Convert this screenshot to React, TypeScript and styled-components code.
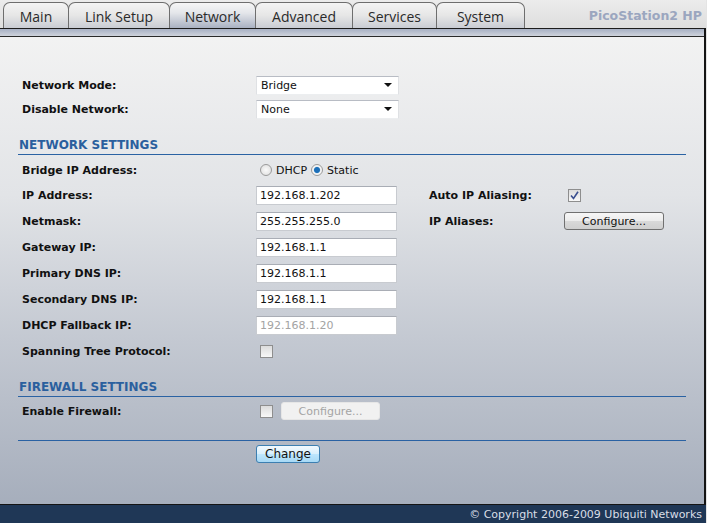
import * as React from "react";
import styled, { createGlobalStyle } from "styled-components";

const GlobalStyle = createGlobalStyle`
  html, body {
    margin: 0;
    padding: 0;
    background: #e4e4e4;
  }
  body {
    font-family: "DejaVu Sans", Verdana, sans-serif;
    font-size: 11px;
    color: #111;
  }
`;

const Page = styled.div`
  display: flex;
  flex-direction: column;
  width: 706px;
  height: 523px;
`;

const TopBar = styled.div`
  display: flex;
  align-items: flex-end;
  justify-content: space-between;
  height: 28px;
  padding-left: 3px;
  background: linear-gradient(#ececec, #dedede);
`;

const Tabs = styled.div`
  display: flex;
  align-items: flex-end;
  height: 100%;
`;

const Tab = styled.div<{ $w: number; $active?: boolean }>`
  box-sizing: border-box;
  width: ${(p) => p.$w}px;
  height: 26px;
  margin-right: -1px;
  display: flex;
  align-items: center;
  justify-content: center;
  padding-top: 1px;
  border: 1px solid #6e6e6e;
  border-bottom: none;
  border-radius: 7px 7px 0 0;
  font-family: "Open Sans", "DejaVu Sans", sans-serif;
  font-size: 14px;
  color: #2a2a2a;
  background: ${(p) =>
    p.$active
      ? "linear-gradient(#f6f6f6 0%, #e4e6ea 40%, #a9b1c2 100%)"
      : "linear-gradient(#f4f4f4 0%, #e6e6e6 50%, #c9ccd3 100%)"};
`;

const Brand = styled.div`
  padding: 0 4px 5px 0;
  font-family: "DejaVu Sans", sans-serif;
  font-weight: bold;
  font-size: 12.5px;
  color: #9ba6bf;
`;

const Panel = styled.div`
  flex: 1;
  display: flex;
  flex-direction: column;
  border-right: 2px solid #141414;
  border-bottom: 1px solid #141414;
  background: linear-gradient(#f3f3f3 0%, #e2e4e7 35%, #c4c9d2 65%, #a6aebc 100%);
`;

const Strip = styled.div`
  height: 7px;
  border-top: 1px solid #1c1c1c;
  border-bottom: 1px solid #2a2a2a;
  background: linear-gradient(#a7b0c3, #cfd3dc);
`;

const Content = styled.div`
  padding: 36px 18px 0 18px;
`;

const Grid = styled.div`
  display: grid;
  grid-template-columns: 238px 173px 135px 1fr;
  align-items: center;
`;

const Row = styled.div<{ $h?: number; $mt?: number }>`
  display: contents;
  & > * {
    height: ${(p) => p.$h ?? 26}px;
    margin-top: ${(p) => p.$mt ?? 0}px;
  }
`;

const Cell = styled.div<{ $gap?: number }>`
  display: flex;
  align-items: center;
  gap: ${(p) => p.$gap ?? 5}px;
`;

const Label = styled(Cell)<{ $side?: boolean }>`
  padding-left: ${(p) => (p.$side ? 0 : 4)}px;
  font-weight: bold;
`;

const SectionTitle = styled.div<{ $mt: number }>`
  margin-top: ${(p) => p.$mt}px;
  padding: 0 0 2px 1px;
  line-height: 14px;
  border-bottom: 1px solid #2a62a3;
  font-weight: bold;
  font-size: 12px;
  color: #2a5f9e;
`;

const Divider = styled.div`
  margin-top: 16px;
  border-top: 1px solid #2a62a3;
`;

const Select = styled.div`
  box-sizing: border-box;
  width: 143px;
  height: 19px;
  display: flex;
  align-items: center;
  justify-content: space-between;
  padding: 0 6px 0 4px;
  background: #fff;
  border-top: 1px solid #b8bcc4;
  border-left: 1px solid #dfe1e4;
  border-right: 1px solid #dfe1e4;
  border-bottom: 1px solid #eceef0;
`;

const Arrow = styled.span`
  width: 0;
  height: 0;
  border-left: 4px solid transparent;
  border-right: 4px solid transparent;
  border-top: 4px solid #111;
`;

const Input = styled.div<{ $disabled?: boolean }>`
  box-sizing: border-box;
  width: 141px;
  height: 19px;
  display: flex;
  align-items: center;
  padding-left: 3px;
  background: #fff;
  border: 1px solid #c8cbd0;
  border-top-color: #a9adb5;
  color: ${(p) => (p.$disabled ? "#a3a3a3" : "#111")};
`;

const Radio = styled.span<{ $on?: boolean }>`
  box-sizing: border-box;
  width: 12px;
  height: 12px;
  border-radius: 50%;
  border: 1px solid #9a9a9a;
  background: ${(p) =>
    p.$on
      ? "radial-gradient(circle, #1d6fb8 0 2.5px, #6aa6d6 3px, #f4f4f4 3.6px)"
      : "radial-gradient(circle, #fafafa, #dcdcdc)"};
`;

const RadioGroup = styled(Cell)`
  padding-left: 4px;
  gap: 4px;
  & > span:nth-child(3) {
    margin-left: 8px;
  }
`;

const Check = styled.span`
  box-sizing: border-box;
  width: 13px;
  height: 13px;
  display: inline-flex;
  align-items: center;
  justify-content: center;
  border: 1px solid #8e8e8e;
  background: linear-gradient(#dcdcdc, #f8f8f8);
  margin-left: 4px;
`;

const Button = styled.div<{ $w: number; $disabled?: boolean }>`
  box-sizing: border-box;
  width: ${(p) => p.$w}px;
  height: 18px;
  display: flex;
  align-items: center;
  justify-content: center;
  border-radius: 3px;
  font-size: 11px;
  border: 1px solid ${(p) => (p.$disabled ? "#e6e6e6" : "#707070")};
  color: ${(p) => (p.$disabled ? "#a4a4a4" : "#111")};
  background: ${(p) =>
    p.$disabled ? "#f1f1f1" : "linear-gradient(#f6f6f6 0%, #ececec 50%, #d9d9d9 51%, #cfcfcf 100%)"};
`;

const ChangeButton = styled(Button)`
  margin-top: 4px;
  margin-left: 238px;
  font-size: 12px;
  border-color: #3c7fb1;
  background: linear-gradient(#f2f9fe 0%, #d8effc 50%, #bee6fd 51%, #a7d9f5 100%);
`;

const Footer = styled.div`
  height: 18px;
  display: flex;
  align-items: center;
  justify-content: flex-end;
  padding-right: 4px;
  background: #1f3756;
  color: #d9dee6;
  font-size: 11px;
`;

const Tick = () => (
  <svg width="9" height="9" viewBox="0 0 9 9">
    <path d="M1 4.5 L3.5 7.5 L8 0.8" fill="none" stroke="#3a4f8f" strokeWidth="1.6" />
  </svg>
);

const tabs: [string, number][] = [
  ["Main", 66],
  ["Link Setup", 102],
  ["Network", 87],
  ["Advanced", 98],
  ["Services", 85],
  ["System", 89],
];

export default function App() {
  return (
    <Page>
      <GlobalStyle />
      <TopBar>
        <Tabs>
          {tabs.map(([name, w]) => (
            <Tab key={name} $w={w} $active={name === "Network"}>
              {name}
            </Tab>
          ))}
        </Tabs>
        <Brand>PicoStation2 HP</Brand>
      </TopBar>
      <Panel>
        <Strip />
        <Content>
          <Grid>
            <Row $h={24}>
              <Label>Network Mode:</Label>
              <Cell>
                <Select>
                  Bridge
                  <Arrow />
                </Select>
              </Cell>
              <Cell />
              <Cell />
            </Row>
            <Row $h={24}>
              <Label>Disable Network:</Label>
              <Cell>
                <Select>
                  None
                  <Arrow />
                </Select>
              </Cell>
              <Cell />
              <Cell />
            </Row>
          </Grid>

          <SectionTitle $mt={17}>NETWORK SETTINGS</SectionTitle>
          <Grid>
            <Row $h={24} $mt={3}>
              <Label>Bridge IP Address:</Label>
              <RadioGroup>
                <Radio />
                DHCP
                <Radio $on />
                Static
              </RadioGroup>
              <Cell />
              <Cell />
            </Row>
            <Row>
              <Label>IP Address:</Label>
              <Cell>
                <Input>192.168.1.202</Input>
              </Cell>
              <Label $side>Auto IP Aliasing:</Label>
              <Cell>
                <Check>
                  <Tick />
                </Check>
              </Cell>
            </Row>
            <Row>
              <Label>Netmask:</Label>
              <Cell>
                <Input>255.255.255.0</Input>
              </Cell>
              <Label $side>IP Aliases:</Label>
              <Cell>
                <Button $w={100}>Configure...</Button>
              </Cell>
            </Row>
            <Row>
              <Label>Gateway IP:</Label>
              <Cell>
                <Input>192.168.1.1</Input>
              </Cell>
              <Cell />
              <Cell />
            </Row>
            <Row>
              <Label>Primary DNS IP:</Label>
              <Cell>
                <Input>192.168.1.1</Input>
              </Cell>
              <Cell />
              <Cell />
            </Row>
            <Row>
              <Label>Secondary DNS IP:</Label>
              <Cell>
                <Input>192.168.1.1</Input>
              </Cell>
              <Cell />
              <Cell />
            </Row>
            <Row>
              <Label>DHCP Fallback IP:</Label>
              <Cell>
                <Input $disabled>192.168.1.20</Input>
              </Cell>
              <Cell />
              <Cell />
            </Row>
            <Row>
              <Label>Spanning Tree Protocol:</Label>
              <Cell>
                <Check />
              </Cell>
              <Cell />
              <Cell />
            </Row>
          </Grid>

          <SectionTitle $mt={16}>FIREWALL SETTINGS</SectionTitle>
          <Grid>
            <Row $mt={1}>
              <Label>Enable Firewall:</Label>
              <Cell $gap={8}>
                <Check />
                <Button $w={99} $disabled>
                  Configure...
                </Button>
              </Cell>
              <Cell />
              <Cell />
            </Row>
          </Grid>
          <Divider />
          <ChangeButton $w={64}>Change</ChangeButton>
        </Content>
      </Panel>
      <Footer>© Copyright 2006-2009 Ubiquiti Networks</Footer>
    </Page>
  );
}
